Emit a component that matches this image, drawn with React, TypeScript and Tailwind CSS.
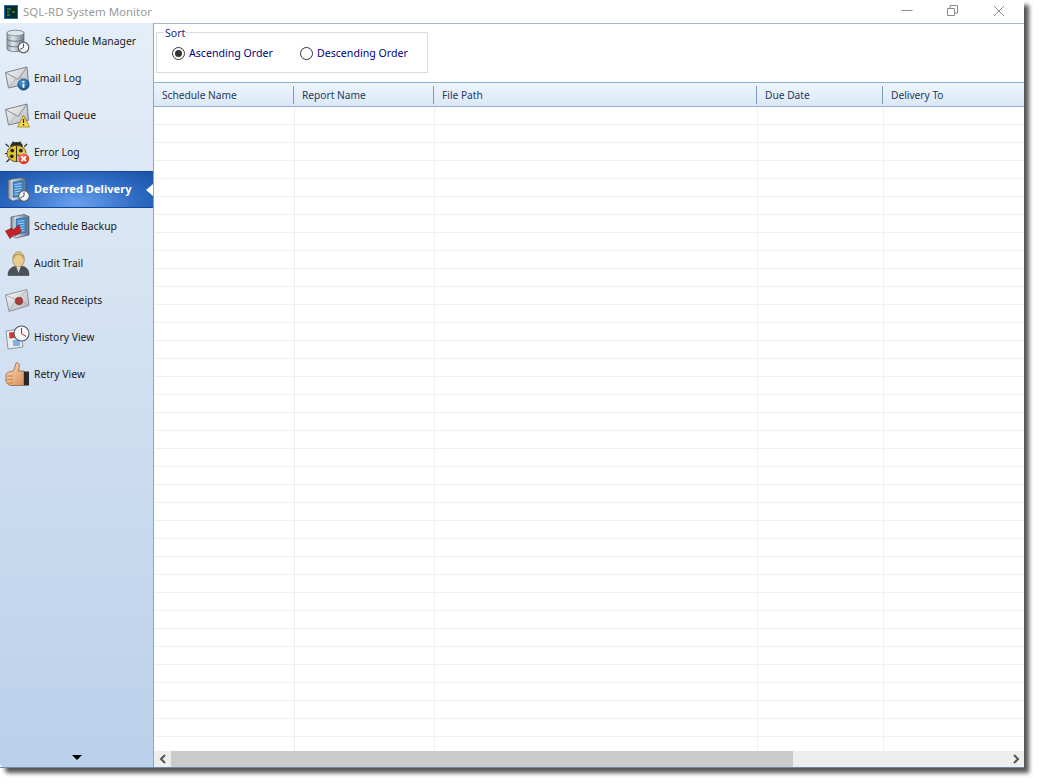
import React from "react";

const Defs = () => (
  <svg width="0" height="0" className="absolute">
    <defs>
      <linearGradient id="silver" x1="0" y1="0" x2="1" y2="0">
        <stop offset="0" stopColor="#8f9ba6" />
        <stop offset="0.35" stopColor="#dfe5ea" />
        <stop offset="1" stopColor="#6f7b88" />
      </linearGradient>
      <linearGradient id="env" x1="0" y1="0" x2="1" y2="1">
        <stop offset="0" stopColor="#fbfbfb" />
        <stop offset="1" stopColor="#b0b4b9" />
      </linearGradient>
      <linearGradient id="server" x1="0" y1="0" x2="1" y2="0">
        <stop offset="0" stopColor="#76889a" />
        <stop offset="0.25" stopColor="#d5dfe8" />
        <stop offset="1" stopColor="#5d7186" />
      </linearGradient>
      <radialGradient id="blueball" cx="0.4" cy="0.3" r="0.8">
        <stop offset="0" stopColor="#4d9bd6" />
        <stop offset="1" stopColor="#0f4a80" />
      </radialGradient>
      <radialGradient id="redball" cx="0.4" cy="0.3" r="0.8">
        <stop offset="0" stopColor="#ff7a5c" />
        <stop offset="1" stopColor="#c9200f" />
      </radialGradient>
      <linearGradient id="skin" x1="0" y1="0" x2="1" y2="1">
        <stop offset="0" stopColor="#fde0bd" />
        <stop offset="1" stopColor="#d98d55" />
      </linearGradient>
    </defs>
  </svg>
);

const Clock = ({ x, y, r = 5 }: { x: number; y: number; r?: number }) => (
  <g>
    <circle cx={x} cy={y} r={r} fill="#f4f6f8" stroke="#59636d" strokeWidth="1.2" />
    <path d={`M${x} ${y - r + 1.5}V${y}L${x - r + 1.5} ${y + 2}`} stroke="#444" strokeWidth="0.9" fill="none" />
  </g>
);

const Envelope = () => (
  <g>
    <path d="M0.5 6.5 L22 1 L23.5 17.5 L3.5 22 Z" fill="url(#env)" stroke="#6f767d" strokeWidth="0.9" />
    <path d="M0.5 6.5 L13 13.5 L22 1" fill="none" stroke="#7f858b" strokeWidth="0.9" />
    <path d="M3.5 22 L11 12.5 M23.5 17.5 L15 11" stroke="#a9adb2" strokeWidth="0.8" fill="none" />
  </g>
);

const Server = () => (
  <g>
    <path d="M1 3 L14 0.5 L19 2.5 L19 21 L6 24 L1 21.5 Z" fill="url(#server)" stroke="#46566a" strokeWidth="0.7" />
    <path d="M6 5 L16 3.5 V18.5 L6 20.5 Z" fill="#3f86c9" stroke="#2a5a8c" strokeWidth="0.5" />
    <path d="M7.5 7.5 L14.5 6.5 M7.5 10 L14.5 9 M7.5 12.5 L14.5 11.5 M7.5 15 L14.5 14 M7.5 17.5 L14.5 16.5" stroke="#a9d3f2" strokeWidth="1" />
  </g>
);

const icons: Record<string, React.ReactNode> = {
  db: (
    <svg width="24" height="25" viewBox="0 0 24 25">
      <path d="M1 4 C1 0.5 18 0.5 18 4 V20 C18 23.5 1 23.5 1 20 Z" fill="url(#silver)" stroke="#5f6a75" strokeWidth="0.7" />
      <ellipse cx="9.5" cy="4" rx="8.5" ry="2.8" fill="#dfe4e9" stroke="#6a7580" strokeWidth="0.6" />
      <path d="M1 10 C3 13 16 13 18 10 M1 15.5 C3 18.5 16 18.5 18 15.5" stroke="#5f6a75" strokeWidth="0.9" fill="none" />
      <Clock x={17.5} y={18.5} r={5.3} />
    </svg>
  ),
  mailInfo: (
    <svg width="25" height="25" viewBox="0 0 25 25">
      <Envelope />
      <circle cx="18.5" cy="18.5" r="5.7" fill="url(#blueball)" stroke="#0d3c68" strokeWidth="0.5" />
      <path d="M18.5 15v1.5M18.5 17.8v4" stroke="#fff" strokeWidth="1.9" />
    </svg>
  ),
  mailWarn: (
    <svg width="25" height="25" viewBox="0 0 25 25">
      <Envelope />
      <path d="M18.5 12.5 L24.5 24 H12.5 Z" fill="#fbd94a" stroke="#8b7510" strokeWidth="0.7" />
      <path d="M18.5 16v4M18.5 21v1.6" stroke="#222" strokeWidth="1.3" />
    </svg>
  ),
  bug: (
    <svg width="25" height="25" viewBox="0 0 26 26">
      <path d="M4 7 L0.5 4 M3 14 H0 M4.5 20 L1.5 23 M20 7 L23 4" stroke="#222" strokeWidth="1.2" />
      <circle cx="8.5" cy="2.5" r="1" fill="#222" />
      <circle cx="15.5" cy="2.5" r="1" fill="#222" />
      <ellipse cx="12" cy="6" rx="6.5" ry="3.8" fill="#2d2b26" />
      <ellipse cx="12" cy="14" rx="10" ry="8.5" fill="#e2c52e" stroke="#3a3314" strokeWidth="0.8" />
      <path d="M12 6v16" stroke="#2d2b26" strokeWidth="1" />
      <circle cx="7.5" cy="11" r="2" fill="#26221a" />
      <circle cx="16.5" cy="11" r="2" fill="#26221a" />
      <circle cx="7" cy="17" r="1.9" fill="#26221a" />
      <circle cx="14.5" cy="16.5" r="1.5" fill="#26221a" />
      <circle cx="19.5" cy="19.5" r="6" fill="url(#redball)" stroke="#fff" strokeWidth="0.6" />
      <path d="M17.1 17.1 L21.9 21.9 M21.9 17.1 L17.1 21.9" stroke="#fff" strokeWidth="1.8" />
    </svg>
  ),
  serverClock: (
    <svg width="23" height="25" viewBox="0 0 23 25">
      <Server />
      <Clock x={17} y={19} r={5.3} />
    </svg>
  ),
  serverArrow: (
    <svg width="25" height="25" viewBox="0 0 25 25">
      <g transform="translate(5 0)">
        <Server />
      </g>
      <path d="M0.5 17 L7 14 L7.5 16.5 L14 11 L16 18 L10 22 L9.5 20 L5 24.5 Z" fill="#c9212a" stroke="#7c0d12" strokeWidth="0.6" />
    </svg>
  ),
  audit: (
    <svg width="24" height="25" viewBox="0 0 24 25" className="ml-[2px]">
      <path d="M1 24.5 C1 17 6 15 12 15 C18 15 22 17 22 24.5 Z" fill="#4a5058" stroke="#2b2f35" strokeWidth="0.5" />
      <ellipse cx="11.5" cy="8.5" rx="5.8" ry="7.8" fill="#e7cc8a" stroke="#8f7c4a" strokeWidth="0.7" />
      <path d="M6.5 7 C8 2 15 2 16.5 7" stroke="#b79c58" strokeWidth="1.6" fill="none" />
      <path d="M9.5 16 L11.5 22 L13.5 16 Z" fill="#d8dde2" />
    </svg>
  ),
  seal: (
    <svg width="25" height="23" viewBox="0 0 25 23">
      <path d="M0.5 6 L22 0.5 L24 16.5 L4 22.5 Z" fill="url(#env)" stroke="#7e858c" strokeWidth="0.8" />
      <path d="M0.5 6 L13 11.5 L22 0.5 M4 22.5 L11 11 M24 16.5 L14 11" stroke="#a2a6ab" strokeWidth="0.8" fill="none" />
      <circle cx="14" cy="12" r="3.8" fill="#a83f3a" stroke="#6d2320" strokeWidth="0.5" />
    </svg>
  ),
  history: (
    <svg width="25" height="25" viewBox="0 0 25 25">
      <path d="M1 6 L15 4 L18 22 L3 24 Z" fill="#e9eef5" stroke="#6b7480" strokeWidth="0.7" />
      <path d="M4 7.5 L9.5 7 V13 L4.5 13.6 Z" fill="#d23a2e" />
      <rect x="8" y="15" width="7" height="6" fill="#7fb1e3" />
      <circle cx="16.5" cy="8.5" r="7.5" fill="#f6f7f8" stroke="#4f5861" strokeWidth="1.1" />
      <path d="M16.5 3V8.5L21 11.5" stroke="#b3261e" strokeWidth="1" fill="none" />
    </svg>
  ),
  thumb: (
    <svg width="25" height="25" viewBox="0 0 25 25">
      <path d="M1 13 C1 10 5 10 8 9 C10 7 10 3 11 1 C14 0 15 3 14 6 L13.5 9 H19 V23.5 H7 C3 23.5 1 21 1 18 Z" fill="url(#skin)" stroke="#8d552a" strokeWidth="0.7" />
      <path d="M2 14 H8 M2 17.5 H8 M3 21 H8" stroke="#b06f3e" strokeWidth="0.7" />
      <rect x="19" y="9.5" width="5" height="14" fill="#26272b" />
    </svg>
  ),
};

const items = [
  { label: "Schedule Manager", icon: "db", box: "pl-[6px] w-[45px]" },
  { label: "Email Log", icon: "mailInfo", box: "pl-[5px] w-[34px]" },
  { label: "Email Queue", icon: "mailWarn", box: "pl-[5px] w-[34px]" },
  { label: "Error Log", icon: "bug", box: "pl-[5px] w-[34px]" },
  { label: "Deferred Delivery", icon: "serverClock", box: "pl-[7px] w-[34px]", active: true },
  { label: "Schedule Backup", icon: "serverArrow", box: "pl-[5px] w-[34px]" },
  { label: "Audit Trail", icon: "audit", box: "pl-[5px] w-[34px]" },
  { label: "Read Receipts", icon: "seal", box: "pl-[5px] w-[34px]" },
  { label: "History View", icon: "history", box: "pl-[5px] w-[34px]" },
  { label: "Retry View", icon: "thumb", box: "pl-[5px] w-[34px]" },
];

const columns = [
  { label: "Schedule Name", head: "w-[139px]", cell: "w-[140px]" },
  { label: "Report Name", head: "w-[140px]", cell: "w-[140px]" },
  { label: "File Path", head: "w-[323px]", cell: "w-[323px]" },
  { label: "Due Date", head: "w-[126px]", cell: "w-[126px]" },
  { label: "Delivery To", head: "flex-1", cell: "flex-1" },
];

const rows = Array.from({ length: 36 }, (_, i) => i);

function Radio({ label, checked, cls }: { label: string; checked?: boolean; cls: string }) {
  return (
    <div className={`flex items-center gap-[4px] ${cls}`}>
      <span className="flex h-[13px] w-[13px] items-center justify-center rounded-full border border-[#333] bg-white">
        {checked && <span className="h-[7px] w-[7px] rounded-full bg-[#333]" />}
      </span>
      <span className="text-[10.6px] whitespace-nowrap text-[#000080]">{label}</span>
    </div>
  );
}

export default function App() {
  return (
    <div className="h-[783px] w-[1039px] overflow-hidden bg-white font-['Noto_Sans',sans-serif]">
      <Defs />
      <div className="flex h-[768px] w-[1024px] flex-col rounded-bl-[4px] bg-white shadow-[5px_5px_4px_rgba(30,30,30,0.75)]">
        <div className="flex h-[23px] shrink-0 items-center bg-white">
          <svg width="14" height="14" viewBox="0 0 14 14" className="ml-[4px]">
            <rect x="0.5" y="0.5" width="13" height="13" fill="#0b2a2e" stroke="#1c6fb0" />
            <path d="M3 4h4M3 7h2M3 10h3M8 7h3" stroke="#3fc43f" strokeWidth="1.2" />
          </svg>
          <span className="ml-[5px] pt-[1px] text-[11.5px] whitespace-nowrap text-[#9a9a9a]">SQL-RD System Monitor</span>
          <div className="ml-auto flex items-center pb-[2px]">
            <svg width="12" height="12" viewBox="0 0 12 12" className="mr-[33px]">
              <path d="M0.5 5.5H11.5" stroke="#8a8a8a" />
            </svg>
            <svg width="11" height="11" viewBox="0 0 11 11" className="mr-[35px] ml-[1px]">
              <path d="M0.5 3.5H7.5V10.5H0.5Z M3 3.5V0.5H10.5V8H7.5" stroke="#8a8a8a" fill="none" />
            </svg>
            <svg width="12" height="12" viewBox="0 0 12 12" className="mr-[19px]">
              <path d="M1 1L11 11M11 1L1 11" stroke="#8a8a8a" />
            </svg>
          </div>
        </div>

        <div className="flex min-h-0 flex-1 border-b border-[#6f8aa8]">
          <aside className="flex w-[154px] shrink-0 flex-col rounded-bl-[4px] border-r border-[#8ba5c2] bg-gradient-to-b from-[#e5eef8] to-[#bad0ea]">
            {items.map((it) => (
              <div
                key={it.label}
                className={`relative flex h-[37px] shrink-0 items-center ${
                  it.active
                    ? "border-y border-[#14479a] bg-[radial-gradient(ellipse_at_50%_90%,#6aa2ee_0%,#2f6cc4_55%,#1a53a6_100%)]"
                    : ""
                }`}
              >
                <span className={`flex shrink-0 items-center ${it.box}`}>{icons[it.icon]}</span>
                <span
                  className={
                    it.active
                      ? "text-[11.1px] font-bold whitespace-nowrap text-white"
                      : "text-[10.4px] whitespace-nowrap text-[#1a1a1a]"
                  }
                >
                  {it.label}
                </span>
                {it.active && (
                  <span className="absolute right-0 top-[12px] h-0 w-0 border-y-[6px] border-r-[7px] border-y-transparent border-r-white" />
                )}
              </div>
            ))}
            <span className="mt-auto mb-[7px] ml-[72px] h-0 w-0 border-x-[5px] border-t-[5px] border-x-transparent border-t-black" />
          </aside>

          <main className="flex min-w-0 flex-1 flex-col border-t border-[#a9b8c8]">
            <div className="h-[58px] shrink-0 pl-[2px]">
              <fieldset className="mt-[2px] h-[47px] w-[272px] border border-[#dcdcdc] pl-[7px]">
                <legend className="px-[1px] text-[10.6px] leading-[13px] text-[#1a237e]">
                  <span className="block translate-y-px">Sort</span>
                </legend>
                <div className="mt-[7px] flex pl-[8px]">
                  <Radio label="Ascending Order" checked cls="w-[128px]" />
                  <Radio label="Descending Order" cls="" />
                </div>
              </fieldset>
            </div>

            <div className="flex h-[25px] shrink-0 items-center border-y border-[#8fb0d2] bg-gradient-to-b from-[#eef5fc] to-[#dbe8f6]">
              {columns.map((c, i) => (
                <div key={c.label} className={`flex h-[18px] items-center ${i > 0 ? "border-l border-[#7d9ab8]" : ""} pl-[8px] ${c.head}`}>
                  <span className="pt-[2px] text-[10.2px] whitespace-nowrap text-[#1d3a5c]">{c.label}</span>
                </div>
              ))}
            </div>

            <div className="min-h-0 flex-1 overflow-hidden bg-white">
              {rows.map((r) => (
                <div key={r} className="flex h-[18px] border-b border-[#f0f0f0]">
                  {columns.map((c, i) => (
                    <div key={c.label} className={`h-full ${i > 0 ? "border-l border-[#f0f0f0]" : ""} ${c.cell}`} />
                  ))}
                </div>
              ))}
            </div>

            <div className="flex h-[16px] shrink-0 items-center bg-[#eeeeee]">
              <span className="flex h-full w-[17px] items-center justify-center">
                <svg width="8" height="10" viewBox="0 0 8 10">
                  <path d="M6 1L2 5L6 9" stroke="#555" strokeWidth="2" fill="none" />
                </svg>
              </span>
              <span className="h-full w-[622px] bg-[#cbcbcb]" />
              <span className="ml-auto flex h-full w-[17px] items-center justify-center">
                <svg width="8" height="10" viewBox="0 0 8 10">
                  <path d="M2 1L6 5L2 9" stroke="#555" strokeWidth="2" fill="none" />
                </svg>
              </span>
            </div>
          </main>
        </div>
      </div>
    </div>
  );
}
